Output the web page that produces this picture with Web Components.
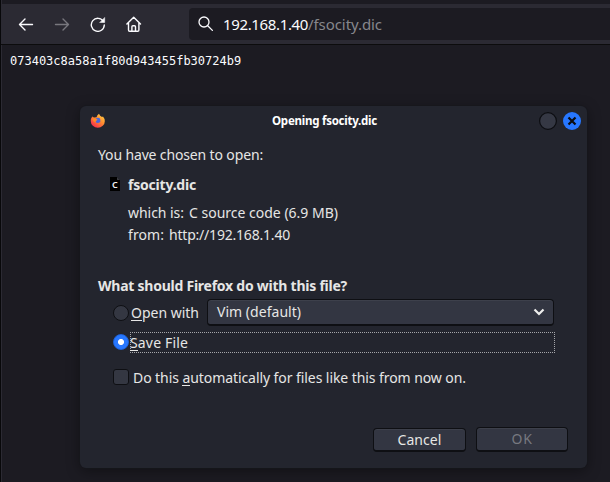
<!DOCTYPE html>
<html lang="en">
<head>
<meta charset="utf-8">
<title>Opening fsocity.dic</title>
<style>
html,body{margin:0;height:100%;background:#1c1b22;overflow:hidden}
body{font-family:"Noto Sans",sans-serif;color:#eeeeec}
</style>
</head>
<body>
<browser-window>
  <nav-bar slot="bar"><url-field><fit-text w="85">192.168.1.40</fit-text><fit-text w="74" slot="path">/fsocity.dic</fit-text></url-field></nav-bar>
  <span slot="page">073403c8a58a1f80d943455fb30724b9</span>
  <download-dialog slot="dialog"></download-dialog>
</browser-window>
<script>
const define=(name,html)=>customElements.define(name,class extends HTMLElement{
  constructor(){super();this.attachShadow({mode:'open'}).innerHTML=html;}
});

define('url-field',`<style>
:host{display:flex;align-items:center;box-sizing:border-box;flex:1;height:32px;padding-left:9px;border-radius:4px 0 0 4px;background:#1c1b22;color:#fbfbfe;font-size:15px;white-space:pre}
svg{flex:none;margin-right:9px}
.p{color:#87878c}
</style><svg width="16" height="16" viewBox="0 0 16 16" fill="none" stroke="#fbfbfe" stroke-width="1.3" stroke-linecap="round"><circle cx="6" cy="6" r="5"/><path d="M9.7 9.7 14.4 14.4"/></svg><span class="h"><slot></slot></span><span class="p"><slot name="path"></slot></span>`);

define('nav-bar',`<style>
:host{display:flex;align-items:center;height:40px;box-sizing:border-box;padding-left:16px;background:#2b2a33}
svg{flex:none;width:16px;height:16px;margin-right:20px;fill:none;stroke:#fbfbfe;stroke-width:1.4;stroke-linecap:round;stroke-linejoin:round}
.off{stroke:#78777e}
.home{margin-right:47px}
</style>
<svg viewBox="0 0 16 16"><path d="M14.5 8.5H1.5M7 3 1.5 8.5 7 14"/></svg>
<svg class="off" viewBox="0 0 16 16"><path d="M1.5 8.5h13M9 3l5.500 5.500L9 14"/></svg>
<svg viewBox="0 0 16 16"><path d="M13.400 5.500A6.500 6.500 0 1 0 14.300 9"/><path d="M14.700 1.800v4.700H10z" fill="#fbfbfe" stroke-width=".5"/></svg>
<svg class="home" viewBox="0 0 16 16"><path d="M.900 8 7.700 1.300 14.500 8M2.500 7v7q0 1.200 1.200 1.200h8q1.200 0 1.200-1.200V7M5.900 15v-4.300q0-1 1-1h1.600q1 0 1 1V15"/></svg>
<slot></slot>`);

define('browser-window',`<style>
:host{display:flex;flex-direction:column;position:relative;box-sizing:border-box;width:610px;height:482px;padding-top:4px;border-left:1px solid #08080a;background:#1c1b22;box-shadow:inset 1px 0 #2b2a33}
.page{border-top:1px solid #0c0c0d;padding:8px 0 0 9px;font:12px/16px "DejaVu Sans Mono",monospace;color:#fbfbfe}
slot[name=dialog]::slotted(*){position:absolute;left:79px;top:106px}
.bar{padding-left:1px}
</style><div class="bar"><slot name="bar"></slot></div><div class="page"><slot name="page"></slot></div><slot name="dialog"></slot>`);

define('title-bar',`<style>
:host{display:grid;grid-template-columns:36px 1fr auto;align-items:center;height:29px;box-sizing:border-box;padding:1px 6px 0 10px}
.t{justify-self:center;color:#fff;font-size:11.500px;font-weight:700;padding-right:16px}
.c{display:flex;gap:6px}
</style>
<svg width="16" height="16" viewBox="0 0 16 16">
<defs><linearGradient id="f" x1="1" y1="0" x2=".2" y2="1"><stop offset="0" stop-color="#ffe14a"/><stop offset=".45" stop-color="#ff9130"/><stop offset="1" stop-color="#f5274e"/></linearGradient></defs>
<path fill="url(#f)" d="M2.200 3.400 4 4.600 6.500 4.300Q7 2 9 .700 9.800 3 12 4L13 3.500Q14.800 5.500 14.800 8.200A7 6.600 0 0 1 .800 8.200Q.800 5 2.200 3.400Z"/>
<path fill="#4c66d8" d="M5 6.200Q6.500 4 9.500 5 10.800 6.500 10.300 8.700 9 10.400 7 9.900 5 9 5 6.200Z"/><path fill="#ff8b26" d="M2 5.500Q5 4.600 7.500 6.600L6.700 7.600Q5.200 7.800 5.500 9.700 3 8.500 2 5.500Z"/></svg>
<fit-text class="t" w="105">Opening fsocity.dic</fit-text>
<div class="c"><svg width="18" height="18"><circle cx="9" cy="9" r="8.400" fill="#353844" stroke="#0c0d11" stroke-width="1.200"/></svg>
<svg width="18" height="18"><circle cx="9" cy="9" r="9" fill="#2777ff"/><path d="M5.500 5.500 12.500 12.500M12.500 5.500 5.500 12.500" stroke="#0b0c10" stroke-width="2.200"/></svg></div>`);

define('push-button',`<style>
:host{display:flex;align-items:center;justify-content:center;box-sizing:border-box;border:1px solid #0e0f13;border-bottom-width:2px;border-radius:4px;background:#333642;box-shadow:inset 0 1px #3d404b}
</style><slot></slot>`);

define('radio-mark',`<style>
:host{display:block;flex:none;box-sizing:border-box;width:16px;height:16px;border:1px solid #0e0f13;border-radius:50%;background:#343742}
:host([checked]){border-color:#1d62db;background:radial-gradient(circle,#fff 0 2.700px,#2777ff 3.300px)}
</style>`);
define('check-mark',`<style>
:host{display:block;flex:none;box-sizing:border-box;width:16px;height:16px;margin-bottom:2px;border:1px solid #0e0f13;border-radius:3px;background:#343742}
</style>`);

define('download-dialog',`<style>
:host{display:flex;flex-direction:column;box-sizing:border-box;width:507px;height:362px;border-radius:6px;background:#23252e;box-shadow:0 0 0 .500px #17181d,0 3px 14px rgba(0,0,0,.4);font-size:14px;color:#e6e6e5}
b{font-weight:700}
u{text-decoration:none;border-bottom:1px solid currentColor;display:inline-block;line-height:15px}
.body{display:flex;flex-direction:column;padding:0 33px 0 18px}
.intro{margin-top:10px}
.file{display:flex;align-items:center;margin:10px 0 0 12px;gap:8px}
.file svg{margin-bottom:2px}
.meta{margin:8px 0 0 30px;display:grid;row-gap:2px}
.meta div{display:flex;gap:5px}
.q{margin-top:31px}
.row{display:flex;align-items:center}
.open{height:27px;margin:3px 0 0 15px}
.sel{flex:1;height:27px;justify-content:space-between;padding:0 8px 0 9px;margin-left:8px}
.focus{display:block;flex:1;height:21px;box-sizing:border-box;border:1px dotted #a5a6aa;margin:0 -1px 0 1px}
.focus fit-text{margin-top:-1px;margin-left:-1px}
.save{margin:6px 0 0 15px}
.save radio-mark{margin-bottom:1px}
.auto{margin:15px 0 0 15px;gap:4px}
.buttons{display:flex;align-items:flex-end;justify-content:flex-end;gap:10px;margin-top:39px;padding-right:19px}
.buttons push-button{width:93px;height:24px}
.buttons .ok{width:92px;height:25px;color:#777980}
</style>
<title-bar></title-bar>
<div class="body">
<fit-text class="intro" w="165">You have chosen to open:</fit-text>
<div class="file"><svg width="10" height="14"><path d="M0 0h7l3 3v11H0z" fill="#000"/><path d="M7 0v3h3z" fill="#393a40"/><text x="2" y="11" font-family="Noto Sans" font-size="9" font-weight="600" fill="#eee">C</text></svg><fit-text w="68"><b>fsocity.dic</b></fit-text></div>
<div class="meta"><div><fit-text w="56">which is:</fit-text><fit-text w="149">C source code (6.9 MB)</fit-text></div><div><fit-text w="36">from:</fit-text><fit-text w="121">http://192.168.1.40</fit-text></div></div>
<fit-text class="q" w="249"><b>What should Firefox do with this file?</b></fit-text>
<div class="row open"><radio-mark></radio-mark><fit-text style="margin-left:2px" w="68"><u>O</u>pen with</fit-text><push-button class="sel"><fit-text w="84">Vim (default)</fit-text><svg width="12" height="8" fill="none" stroke="#eeeeec" stroke-width="2.200"><path d="M1.500 1.500 6 6 10.500 1.500"/></svg></push-button></div>
<div class="row save"><radio-mark checked></radio-mark><div class="focus"><fit-text w="58"><u>S</u>ave File</fit-text></div></div>
<div class="row auto"><check-mark></check-mark><fit-text w="333">Do this <u>a</u>utomatically for files like this from now on.</fit-text></div>
</div>
<div class="buttons"><push-button><fit-text w="44">Cancel</fit-text></push-button><push-button class="ok"><fit-text w="21">OK</fit-text></push-button></div>`);

/* One line of text whose tracking is tuned so that it spans the w attribute.
   Registered last, so the surrounding styles apply when it is measured. */
customElements.define('fit-text',class extends HTMLElement{
  constructor(){
    super();
    this.attachShadow({mode:'open'}).innerHTML=`<style>:host{display:inline-block;flex:none;white-space:pre;line-height:20px}span{display:inline-block}</style><span><slot></slot></span>`;
  }
  connectedCallback(){
    const s=this.shadowRoot.querySelector('span');
    const w=+this.getAttribute('w'),n=this.textContent.length;
    if(w&&n)s.style.letterSpacing=((w-s.getBoundingClientRect().width)/n)+'px';
  }
});
</script>
</body>
</html>
